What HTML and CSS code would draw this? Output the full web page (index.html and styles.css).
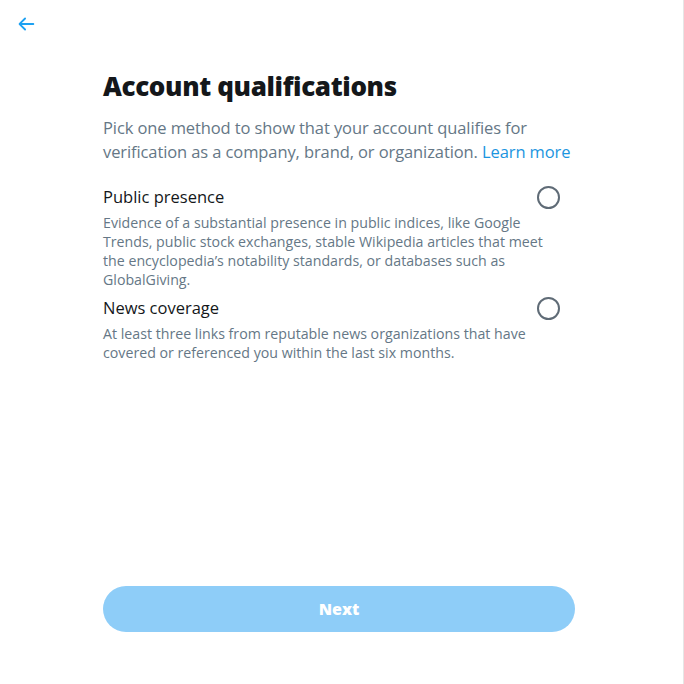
FILE: index.html
```html
<!DOCTYPE html>
<html>
<head>
<meta charset="utf-8">
<link rel="stylesheet" href="styles.css">
</head>
<body>
<div class="page">
  <div class="topbar">
    <svg class="back" viewBox="0 0 24 24" width="22" height="22"><path d="M20 11H7.414l4.293-4.293a1 1 0 0 0-1.414-1.414l-6 6a1 1 0 0 0 0 1.414l6 6a1 1 0 0 0 1.414-1.414L7.414 13H20a1 1 0 1 0 0-2z" fill="#1da1f2"/></svg>
  </div>
  <main class="content">
    <h1 class="title">Account qualifications</h1>
    <p class="lead">Pick one method to show that your account qualifies for verification as a company, brand, or organization. <a class="link">Learn more</a></p>
    <div class="option">
      <div class="option-head">
        <span class="option-title">Public presence</span>
        <span class="radio"></span>
      </div>
      <p class="option-desc">Evidence of a substantial presence in public indices, like Google Trends, public stock exchanges, stable Wikipedia articles that meet the encyclopedia’s notability standards, or databases such as GlobalGiving.</p>
    </div>
    <div class="option">
      <div class="option-head">
        <span class="option-title">News coverage</span>
        <span class="radio"></span>
      </div>
      <p class="option-desc">At least three links from reputable news organizations that have covered or referenced you within the last six months.</p>
    </div>
    <div class="spacer"></div>
    <button class="next">Next</button>
  </main>
</div>
</body>
</html>
```

FILE: styles.css
```css
html, body {
  margin: 0;
  padding: 0;
  background: #ffffff;
}
body {
  font-family: "Open Sans", "Noto Sans", sans-serif;
  width: 684px;
  height: 684px;
  overflow: hidden;
}
.page {
  height: 684px;
  display: flex;
  flex-direction: column;
  border-right: 1px solid #e6e6e6;
  box-sizing: border-box;
}
.topbar {
  height: 50px;
  padding: 13px 0 0 15px;
  box-sizing: border-box;
}
.back { display: block; }
.content {
  flex: 1;
  display: flex;
  flex-direction: column;
  padding: 19px 108px 52px 103px;
}
.title {
  margin: 0;
  font-size: 26px;
  font-weight: 800;
  color: #14171a;
  line-height: 34px;
  letter-spacing: -0.35px;
}
.lead {
  margin: 13px -6px 14px 0;
  font-size: 16.5px;
  line-height: 24px;
  color: #657786;
  letter-spacing: -0.1px;
}
.link { color: #1b95e0; }
.option { margin-top: 7px; }
.option-head {
  display: flex;
  justify-content: space-between;
  align-items: center;
  padding-right: 15px;
}
.option-title {
  font-size: 16.5px;
  color: #14171a;
  line-height: 24px;
}
.radio {
  width: 19px;
  height: 19px;
  border: 2px solid #5f6b76;
  border-radius: 50%;
}
.option-desc {
  margin: 4px 0 0;
  font-size: 14.2px;
  line-height: 19px;
  color: #657786;
  padding-right: 20px;
}
.spacer { flex: 1; }
.next {
  height: 46px;
  border: 0;
  border-radius: 23px;
  background: #8ecdf8;
  color: #ffffff;
  font-family: "Open Sans", sans-serif;
  font-weight: 800;
  font-size: 16px;
}
```
